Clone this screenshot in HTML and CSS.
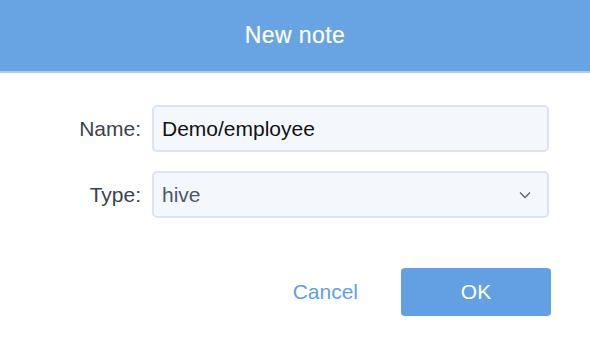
FILE: index.html
```html
<!DOCTYPE html>
<html lang="en">
<head>
<meta charset="UTF-8">
<meta name="viewport" content="width=device-width, initial-scale=1.0">
<title>New note</title>
<link rel="stylesheet" href="styles.css">
</head>
<body>

<div class="dialog">
  <div class="dialog-header">New note</div>

  <form class="note-form">
    <div class="form-row">
      <label for="note-name">Name:</label>
      <input type="text" id="note-name" value="Demo/employee">
    </div>
    <div class="form-row">
      <label for="note-type">Type:</label>
      <div class="select-box">
        <span>hive</span>
        <svg width="12" height="8" viewBox="0 0 12 8"><path d="M1 1.5 L6 6.5 L11 1.5" fill="none" stroke="#5a6472" stroke-width="1.3"/></svg>
      </div>
    </div>

    <div class="form-actions">
      <button type="button" class="cancel-btn">Cancel</button>
      <button type="submit" class="ok-btn">OK</button>
    </div>
  </form>
</div>

</body>
</html>
```

FILE: styles.css
```css
body {
    font-family: "Liberation Sans", Arial, sans-serif;
    margin: 0;
    padding: 0;
    background: #fff;
  }

  .dialog-header {
    height: 71px;
    line-height: 71px;
    background-color: #68a3e3;
    border-bottom: 2px solid #a9cbf0;
    color: #fff;
    font-size: 23px;
    letter-spacing: 0.4px;
    -webkit-text-stroke: 0.2px #fff;
    text-align: center;
  }

  .note-form {
    padding: 32px 41px 0 0;
  }

  .form-row {
    display: flex;
    align-items: center;
    margin-bottom: 19px;
  }

  .form-row label {
    width: 152px;
    padding-right: 11px;
    text-align: right;
    font-size: 21px;
    color: #3a4350;
    box-sizing: border-box;
    flex-shrink: 0;
  }

  .form-row input,
  .select-box {
    flex: 1;
    height: 47px;
    box-sizing: border-box;
    background: #f4f8fd;
    border: 2px solid #dbe4f0;
    border-radius: 5px;
    padding: 0 8px;
    font-family: inherit;
    font-size: 21px;
  }

  .form-row input {
    color: #111;
  }

  .select-box {
    display: flex;
    align-items: center;
    justify-content: space-between;
    color: #4d5866;
    padding-right: 16px;
  }

  .form-actions {
    display: flex;
    justify-content: flex-end;
    align-items: center;
    margin-top: 50px;
    margin-right: -2px;
  }

  .cancel-btn {
    background: none;
    border: none;
    color: #62a0e3;
    font-family: inherit;
    font-size: 21px;
    padding: 0;
    margin-right: 43px;
  }

  .ok-btn {
    width: 150px;
    height: 48px;
    background-color: #62a0e3;
    color: #fff;
    border: none;
    border-radius: 4px;
    font-family: inherit;
    font-size: 21px;
  }
```
